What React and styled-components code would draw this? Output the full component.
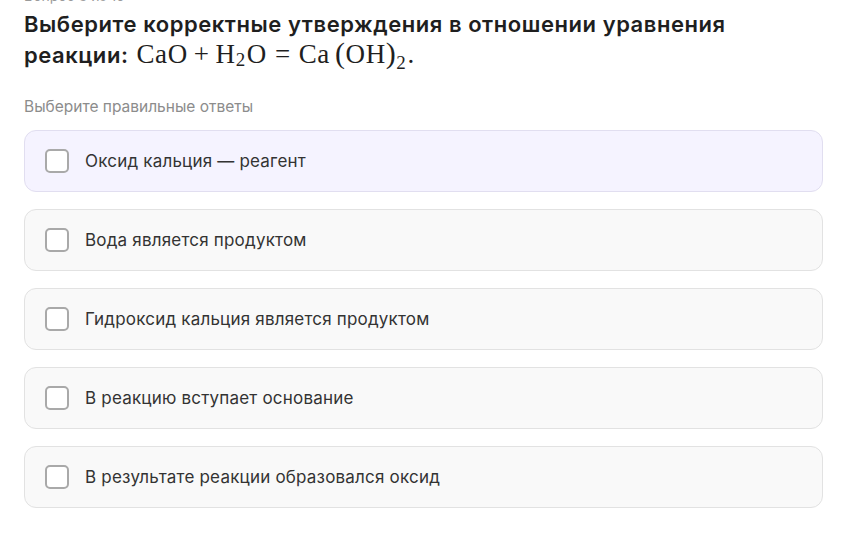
import React from 'react';
import styled, { createGlobalStyle } from 'styled-components';

const GlobalStyle = createGlobalStyle`
  html, body {
    margin: 0;
    padding: 0;
    background: #ffffff;
  }
  body {
    font-family: "Inter", "Noto Sans", sans-serif;
    color: #222222;
  }
`;

const Page = styled.div`
  padding: 0 23px 0 24px;
  overflow: hidden;
  height: 547px;
  box-sizing: border-box;
`;

const Counter = styled.div`
  margin-top: -12px;
  height: 16px;
  font-size: 14px;
  color: #9a9a9a;
  line-height: 16px;
`;

const Title = styled.h1`
  margin: 6px 0 0;
  max-width: 740px;
  height: 56px;
  font-size: 22px;
  font-weight: 600;
  line-height: 28px;
  color: #1f1f1f;
  letter-spacing: 0.55px;
`;

const Formula = styled.span`
  font-family: "Liberation Serif", "DejaVu Serif", serif;
  font-weight: 400;
  font-size: 27px;
  line-height: 1;
  letter-spacing: 0.6px;
  white-space: nowrap;
  margin-left: 8px;
`;

const Op = styled.span`
  margin: 0 ${({ $rel }) => ($rel ? '8px' : '6px')};
`;

const Paren = styled.span`
  font-size: 30px;
  margin-left: ${({ $open }) => ($open ? '5px' : '0')};
`;

const Sub = styled.span`
  font-size: 19px;
  vertical-align: ${({ $low }) => ($low ? '-6px' : '-3px')};
  margin-right: 1px;
`;

const Hint = styled.div`
  margin-top: 32px;
  font-size: 15.5px;
  color: #8c8c8c;
  line-height: 18px;
`;

const Options = styled.div`
  margin-top: 14px;
  display: flex;
  flex-direction: column;
  gap: 17px;
`;

const Option = styled.label`
  display: flex;
  align-items: center;
  gap: 16px;
  height: 62px;
  box-sizing: border-box;
  padding: 0 20px;
  border-radius: 12px;
  border: 1px solid ${({ $active }) => ($active ? '#e1def0' : '#e2e2e2')};
  background: ${({ $active }) => ($active ? '#f5f3ff' : '#f9f9f9')};
  cursor: pointer;
`;

const Box = styled.span`
  flex: none;
  width: 20px;
  height: 20px;
  border: 2px solid #a9a9a9;
  border-radius: 5px;
  background: #ffffff;
`;

const OptionText = styled.span`
  font-size: 17px;
  color: #333333;
  letter-spacing: 0.2px;
`;

const answers = [
  'Оксид кальция — реагент',
  'Вода является продуктом',
  'Гидроксид кальция является продуктом',
  'В реакцию вступает основание',
  'В результате реакции образовался оксид',
];

export default function App() {
  return (
    <>
      <GlobalStyle />
      <Page>
        <Counter>Вопрос 8 из 10</Counter>
        <Title>
          Выберите корректные утверждения в отношении уравнения реакции:
          <Formula>
            CaO<Op>+</Op>H<Sub>2</Sub>O<Op $rel>=</Op>Ca<Paren $open>(</Paren>OH<Paren>)</Paren>
            <Sub $low>2</Sub>.
          </Formula>
        </Title>
        <Hint>Выберите правильные ответы</Hint>
        <Options>
          {answers.map((a, i) => (
            <Option key={a} $active={i === 0}>
              <Box />
              <OptionText>{a}</OptionText>
            </Option>
          ))}
        </Options>
      </Page>
    </>
  );
}
